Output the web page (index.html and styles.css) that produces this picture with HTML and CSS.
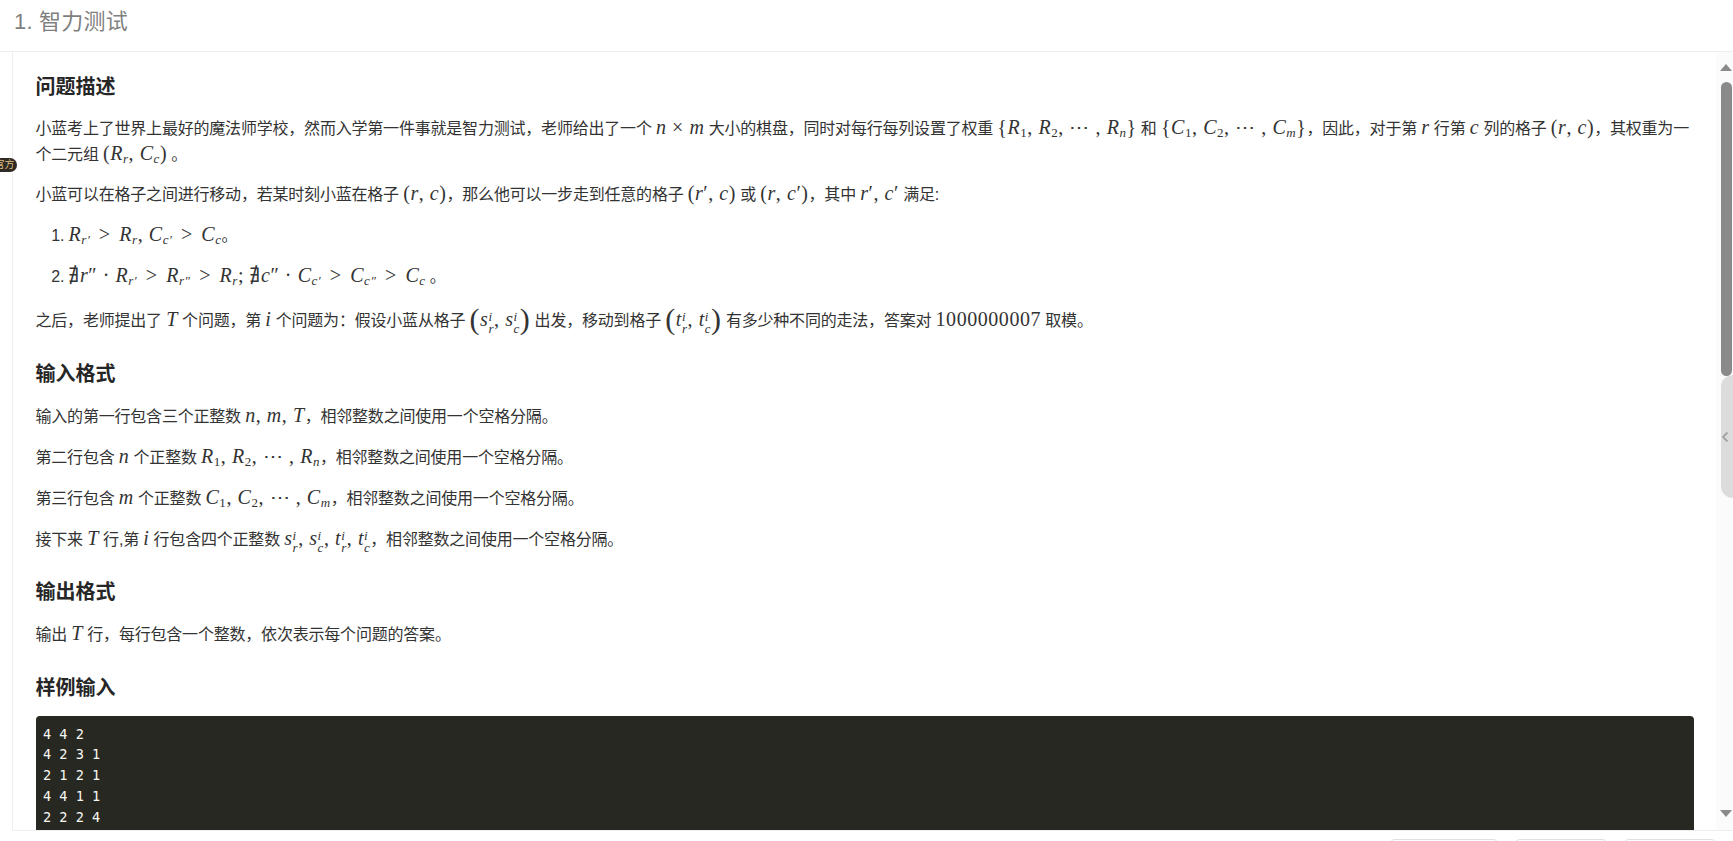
FILE: index.html
```html
<!DOCTYPE html>
<html lang="zh">
<head>
<meta charset="utf-8">
<title>智力测试</title>
<link rel="stylesheet" href="styles.css">
</head>
<body>
<span class="badge">官方</span>
<header class="title-bar"><h1>1. 智力测试</h1></header>
<main class="main">
  <div class="rail"></div>
  <article class="content">
    <h2 class="first">问题描述</h2>
    <p>小蓝考上了世界上最好的魔法师学校，然而入学第一件事就是智力测试，老师给出了一个 <span class="m"><i>n</i> × <i>m</i></span> 大小的棋盘，同时对每行每列设置了权重 <span class="m">{<i>R</i><sub>1</sub>, <i>R</i><sub>2</sub>, ⋯ , <i>R<sub>n</sub></i>}</span> 和 <span class="m">{<i>C</i><sub>1</sub>, <i>C</i><sub>2</sub>, ⋯ , <i>C<sub>m</sub></i>}</span>，因此，对于第 <span class="m"><i>r</i></span> 行第 <span class="m"><i>c</i></span> 列的格子 <span class="m">(<i>r</i>, <i>c</i>)</span>，其权重为一<br>个二元组 <span class="m">(<i>R<sub>r</sub></i>, <i>C<sub>c</sub></i>)</span> 。</p>
    <p>小蓝可以在格子之间进行移动，若某时刻小蓝在格子 <span class="m">(<i>r</i>, <i>c</i>)</span>，那么他可以一步走到任意的格子 <span class="m">(<i>r</i>′, <i>c</i>)</span> 或 <span class="m">(<i>r</i>, <i>c</i>′)</span>，其中 <span class="m"><i>r</i>′, <i>c</i>′</span> 满足:</p>
    <ol>
      <li><span class="m"><i>R<sub>r′</sub></i> <span class="rel">&gt;</span> <i>R<sub>r</sub></i>, <i>C<sub>c′</sub></i> <span class="rel">&gt;</span> <i>C<sub>c</sub></i></span>。</li>
      <li><span class="m">∄<i>r</i>″ · <i>R<sub>r′</sub></i> <span class="rel">&gt;</span> <i>R<sub>r″</sub></i> <span class="rel">&gt;</span> <i>R<sub>r</sub></i>; ∄<i>c</i>″ · <i>C<sub>c′</sub></i> <span class="rel">&gt;</span> <i>C<sub>c″</sub></i> <span class="rel">&gt;</span> <i>C<sub>c</sub></i></span> 。</li>
    </ol>
    <p>之后，老师提出了 <span class="m"><i>T</i></span> 个问题，第 <span class="m"><i>i</i></span> 个问题为：假设小蓝从格子 <span class="m"><span class="big">(</span><i>s</i><span class="ss"><i>i</i><i>r</i></span>, <i>s</i><span class="ss"><i>i</i><i>c</i></span><span class="big">)</span></span> 出发，移动到格子 <span class="m"><span class="big">(</span><i>t</i><span class="ss"><i>i</i><i>r</i></span>, <i>t</i><span class="ss"><i>i</i><i>c</i></span><span class="big">)</span></span> 有多少种不同的走法，答案对 <span class="m">1000000007</span> 取模。</p>
    <h2>输入格式</h2>
    <p>输入的第一行包含三个正整数 <span class="m"><i>n</i>, <i>m</i>, <i>T</i></span>，相邻整数之间使用一个空格分隔。</p>
    <p>第二行包含 <span class="m"><i>n</i></span> 个正整数 <span class="m"><i>R</i><sub>1</sub>, <i>R</i><sub>2</sub>, ⋯ , <i>R<sub>n</sub></i></span>，相邻整数之间使用一个空格分隔。</p>
    <p>第三行包含 <span class="m"><i>m</i></span> 个正整数 <span class="m"><i>C</i><sub>1</sub>, <i>C</i><sub>2</sub>, ⋯ , <i>C<sub>m</sub></i></span>，相邻整数之间使用一个空格分隔。</p>
    <p>接下来 <span class="m"><i>T</i></span> 行,第 <span class="m"><i>i</i></span> 行包含四个正整数 <span class="m"><i>s</i><span class="ss"><i>i</i><i>r</i></span>, <i>s</i><span class="ss"><i>i</i><i>c</i></span>, <i>t</i><span class="ss"><i>i</i><i>r</i></span>, <i>t</i><span class="ss"><i>i</i><i>c</i></span></span>，相邻整数之间使用一个空格分隔。</p>
    <h2>输出格式</h2>
    <p>输出 <span class="m"><i>T</i></span> 行，每行包含一个整数，依次表示每个问题的答案。</p>
    <h2>样例输入</h2>
    <pre class="code">4 4 2
4 2 3 1
2 1 2 1
4 4 1 1
2 2 2 4</pre>
  </article>
  <aside class="scroll">
    <span class="arrow up"></span>
    <span class="thumb"></span>
    <span class="arrow down"></span>
    <span class="handle">
      <svg width="8" height="12" viewBox="0 0 8 12"><path d="M6.5 1.5 2 6l4.500 4.500" fill="none" stroke="#a3a3a3" stroke-width="1.800"/></svg>
    </span>
  </aside>
</main>
<footer class="footer">
  <span class="btn wide"></span>
  <span class="btn"></span>
  <span class="btn"></span>
</footer>
</body>
</html>
```

FILE: styles.css
```css
* { box-sizing: border-box; }
html, body { height: 100%; }
body {
  margin: 0;
  height: 841px;
  overflow: hidden;
  position: relative;
  display: flex;
  flex-direction: column;
  background: #fff;
  color: #333;
  font-family: "Liberation Sans", "Noto Sans CJK SC", sans-serif;
}
.badge {
  position: absolute;
  left: -8px;
  top: 158px;
  width: 25px;
  height: 14px;
  border-radius: 7px;
  background: #2e2a24;
  color: #dcbc82;
  font-size: 10px;
  line-height: 14px;
  text-align: center;
  z-index: 2;
}
.title-bar {
  flex: none;
  height: 52px;
  padding: 8px 14px 0;
  border-bottom: 1px solid #eee;
}
.title-bar h1 {
  margin: 0;
  font-size: 22px;
  line-height: 28px;
  font-weight: 400;
  letter-spacing: 0.2px;
  color: #7f7f7f;
}
.main {
  flex: 1;
  min-height: 0;
  display: flex;
  overflow: hidden;
  position: relative;
}
.rail {
  flex: none;
  width: 13px;
  border-right: 1px solid #eee;
}
.content {
  flex: 1;
  min-width: 0;
  padding: 21px 22px 0 22.5px;
  overflow: hidden;
  font-size: 16px;
  line-height: 26px;
  letter-spacing: -0.2px;
}
h2 {
  margin: 25.5px 0 16px;
  font-size: 20px;
  line-height: 28px;
  font-weight: 700;
  letter-spacing: 0;
  color: #262626;
}
h2.first { margin: 0 0 15px; }
p { margin: 0 0 15px; white-space: nowrap; }
h2.first + p { margin-bottom: 14px; }
ol { margin: 0 0 18px; padding-left: 33px; }
ol li { margin-bottom: 15px; }
ol li:last-child { margin-bottom: 0; }
.m {
  font-family: "Liberation Serif", "DejaVu Serif", serif;
  font-size: 20px;
  letter-spacing: 0.55px;
  line-height: 0;
}
.rel { margin: 0 3px; }
.m sub {
  font-size: 13px;
  line-height: 0;
  vertical-align: -3px;
}
.big { font-size: 30px; font-weight: 200; line-height: 0; vertical-align: -3px; }
.ss {
  display: inline-flex;
  flex-direction: column;
  vertical-align: 5px;
  font-size: 13px;
  line-height: 12px;
  height: 12px;
}
.code {
  margin: -2px 0 0;
  padding: 8px 7.5px 20px;
  border-radius: 4px;
  background: #272822;
  color: #f8f8f2;
  font-family: "DejaVu Sans Mono", monospace;
  font-size: 13.6px;
  line-height: 20.75px;
  letter-spacing: 0;
}
.scroll {
  flex: none;
  width: 17px;
  padding: 12px 0 13px 4px;
  background: #fbfbfb;
  display: flex;
  flex-direction: column;
  position: relative;
}
.arrow {
  flex: none;
  width: 0;
  height: 0;
  border-left: 6.5px solid transparent;
  border-right: 6.5px solid transparent;
}
.arrow.up { border-bottom: 7px solid #8a8a8a; }
.arrow.down { border-top: 7px solid #8a8a8a; margin-top: auto; }
.thumb {
  flex: none;
  width: 11px;
  height: 294px;
  margin: 11px 0 0 1px;
  border-radius: 6px;
  background: #8a8a8a;
}
.handle {
  position: absolute;
  left: 5px;
  top: 323px;
  width: 12px;
  height: 123px;
  border-radius: 12px 0 0 12px;
  background: #dcdcdc;
  display: flex;
  align-items: center;
}
.footer {
  flex: none;
  height: 11px;
  overflow: hidden;
  margin-left: 13px;
  padding: 8px 16px 0 0;
  border-top: 1px solid #eee;
  display: flex;
  justify-content: flex-end;
  gap: 15px;
}
.btn {
  flex: none;
  width: 94px;
  height: 30px;
  border: 1px solid #e0e0e0;
  border-radius: 6px;
  background: #fff;
}
.btn.wide { width: 110px; }
```
